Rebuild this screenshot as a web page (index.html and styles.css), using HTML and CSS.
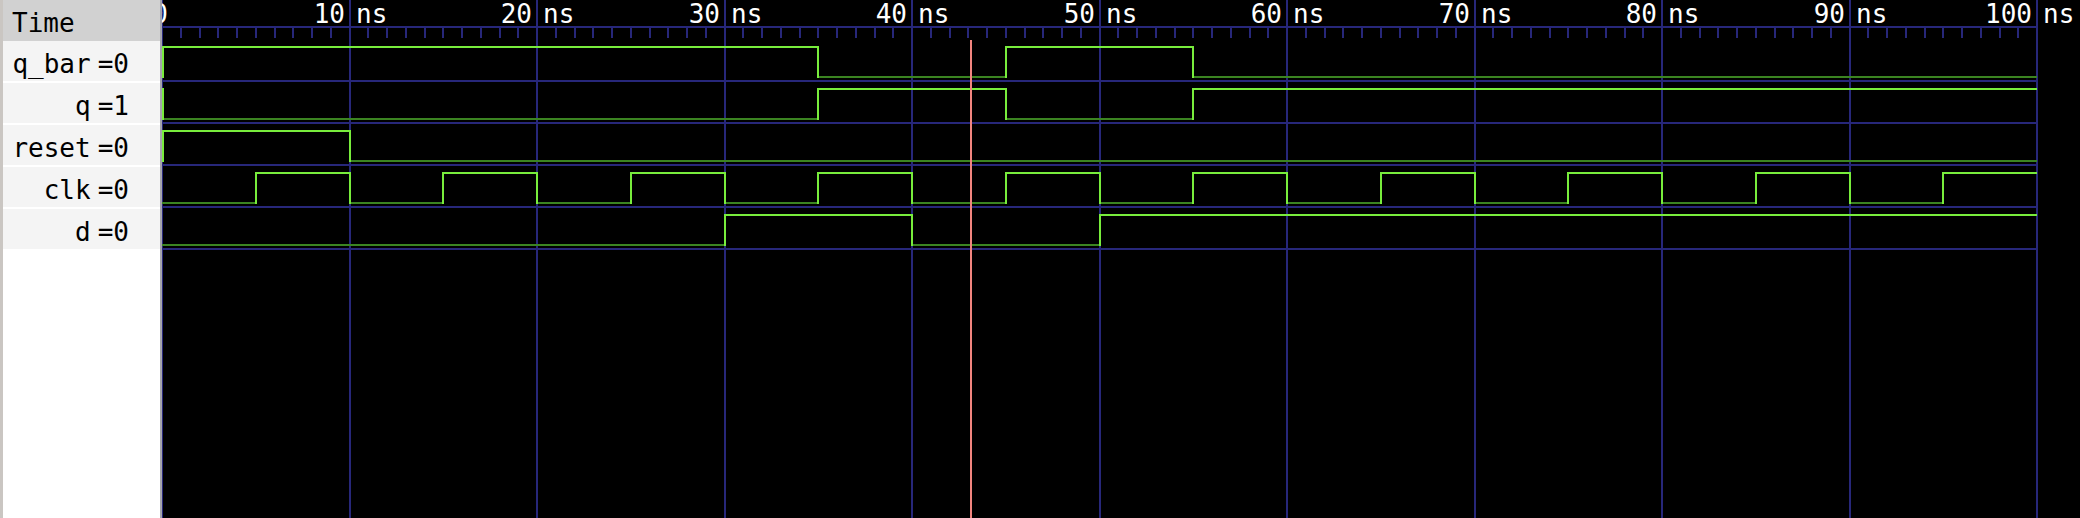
FILE: index.html
```html
<!DOCTYPE html>
<html lang="en">
<head>
    <meta charset="UTF-8">
    <title>Waveform</title>
    <link rel="stylesheet" href="styles.css">
</head>
<body>

    <div class="viewer">
        <div class="names">
            <div class="names-head">Time</div>
            <div class="sig"><span>q_bar</span><span class="val">=0</span></div>
            <div class="sig"><span>q</span><span class="val">=1</span></div>
            <div class="sig"><span>reset</span><span class="val">=0</span></div>
            <div class="sig"><span>clk</span><span class="val">=0</span></div>
            <div class="sig"><span>d</span><span class="val">=0</span></div>
        </div>
        <div class="waves">
            <svg id="wave" width="1918" height="518" xmlns="http://www.w3.org/2000/svg"></svg>
        </div>
    </div>

    <script>
        const PX = 18.75;       // pixels per ns
        const END = 100;
        const ROW0 = 81, PITCH = 42;
        const GRID = "#27277a", HI = "#78ec3c", LO = "#3b8421";

        // [time, value] pairs, edge0 = draw the transition at t=0
        const signals = [
            {edge0: true,  wave: [[0,1],[35,0],[45,1],[55,0]]},
            {edge0: true,  wave: [[0,0],[35,1],[45,0],[55,1]]},
            {edge0: true,  wave: [[0,1],[10,0]]},
            {edge0: false, wave: [[0,0],[5,1],[10,0],[15,1],[20,0],[25,1],[30,0],[35,1],[40,0],[45,1],
                                  [50,0],[55,1],[60,0],[65,1],[70,0],[75,1],[80,0],[85,1],[90,0],[95,1]]},
            {edge0: false, wave: [[0,0],[30,1],[40,0],[50,1]]}
        ];

        const svg = document.getElementById("wave");
        let out = "";
        const x = t => Math.round(t * PX);
        const line = (x1, y1, x2, y2, c) =>
            `<line x1="${x1}" y1="${y1}" x2="${x2}" y2="${y2}" stroke="${c}" stroke-width="2"/>`;

        // grid + axis
        for (let t = 0; t <= END; t += 10) out += line(x(t), 0, x(t), 518, GRID);
        out += line(0, 27, x(END), 27, GRID);
        for (let t = 1; t < END; t++) {
            if (t % 10) out += line(x(t), 27, x(t), 38, GRID);
        }
        signals.forEach((s, i) => out += line(0, ROW0 + PITCH * i, x(END), ROW0 + PITCH * i, GRID));

        // time labels
        out += `<text class="tl" x="6" y="23" text-anchor="end">0</text>`;
        for (let t = 10; t <= END; t += 10) {
            out += `<text class="tl" x="${x(t) - 5}" y="23" text-anchor="end">${t}</text>`;
            out += `<text class="tl" x="${x(t) + 6}" y="23">ns</text>`;
        }

        // signals
        signals.forEach((s, i) => {
            const lo = ROW0 + PITCH * i - 4, hi = lo - 30;
            s.wave.forEach(([t, v], j) => {
                const t2 = j + 1 < s.wave.length ? s.wave[j + 1][0] : END;
                out += line(x(t), v ? hi : lo, x(t2), v ? hi : lo, v ? HI : LO);
            });
            s.wave.forEach(([t], j) => {
                if (j > 0 || s.edge0) out += line(x(t) + (j ? 0 : 1), hi - 1, x(t) + (j ? 0 : 1), lo + 1, HI);
            });
        });

        // cursor
        out += `<rect x="808" y="40" width="2" height="478" fill="#f2857f"/>`;

        svg.innerHTML = out;
    </script>

</body>
</html>
```

FILE: styles.css
```css
html, body {
    margin: 0;
    height: 518px;
    overflow: hidden;
    background: #000;
}
.viewer {
    display: flex;
    height: 518px;
}
.names {
    width: 157px;
    flex: none;
    background: #fff;
    border-left: 3px solid #cac6c2;
    border-right: 2px solid #a4a4ac;
    font-family: "DejaVu Sans Mono", monospace;
    font-size: 26px;
    color: #000;
}
.names-head {
    height: 35px;
    line-height: 35px;
    padding: 6px 0 0 9px;
    background: #d1d1d1;
}
.sig {
    height: 34px;
    line-height: 34px;
    padding: 6px 31px 0 0;
    margin-bottom: 2px;
    background: #f4f4f4;
    display: flex;
    justify-content: flex-end;
}
.val {
    margin-left: 7px;
}
.waves {
    flex: 1;
    background: #000;
    overflow: hidden;
}
#wave {
    display: block;
}
.tl {
    font-family: "DejaVu Sans Mono", monospace;
    font-size: 26px;
    fill: #fff;
}
```
